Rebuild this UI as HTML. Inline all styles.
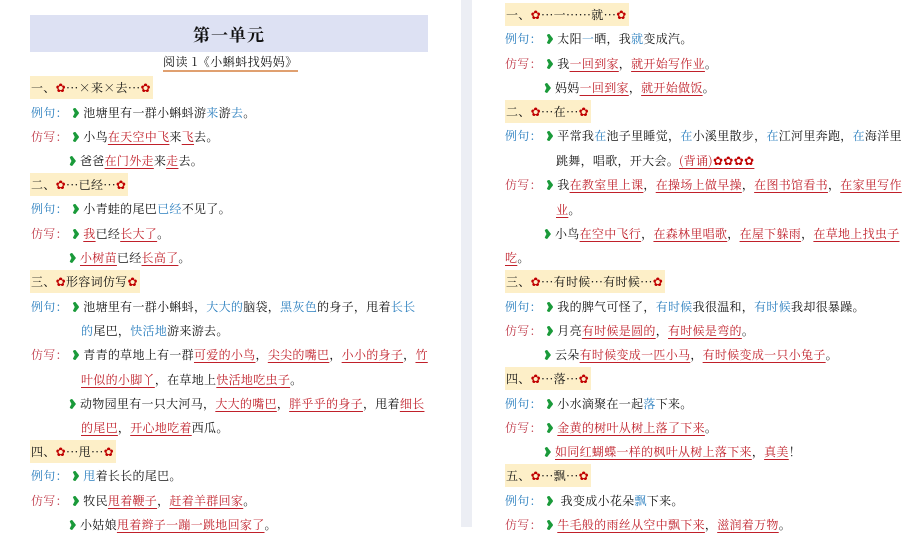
<!DOCTYPE html>
<html><head><meta charset="utf-8"><style>
html,body{margin:0;padding:0}
body{width:912px;height:527px;overflow:hidden;background:#fff;position:relative;font-family:"Noto Serif CJK SC","Liberation Serif",serif;font-size:12px;color:#111}
.gap{position:absolute;left:461px;top:0;width:11px;height:527px;background:#eceef4}
.l{position:absolute;height:16px;line-height:16px;white-space:nowrap;letter-spacing:0.3px}
.b{color:#2b7fbf}
.lb{color:#2b7fbf}
.lr{color:#c2414f}
.r{color:#c0202a;text-decoration:underline;text-decoration-color:#c0202a;text-underline-offset:3px}
.g{display:inline-block;width:7px;height:10px;background:#1a9a3a;border-radius:50% 60% 60% 50%;margin:0 4px 0 1px;vertical-align:-1px;clip-path:polygon(0 0,45% 0,100% 50%,45% 100%,0 100%,35% 50%)}
.h{background:#fdefc8;padding:3px 2px 3px 1px}
.f{color:#c00000;font-family:"DejaVu Sans",sans-serif}
.title{position:absolute;left:30px;top:15px;width:398px;height:37px;background:#dde1f3;text-align:center;line-height:37px;font-weight:bold;font-size:17px;letter-spacing:1px}
.sub{position:absolute;left:163px;top:54px;line-height:16px;border-bottom:2px solid #e0a070;letter-spacing:0.5px}
</style></head><body>
<div class="gap"></div>
<div class="title">第一单元</div>
<div class="sub">阅读 1《小蝌蚪找妈妈》</div>

<div class="l" style="left:30px;top:80px"><span class="h">一、<span class="f">✿</span>···×来×去···<span class="f">✿</span></span></div>
<div class="l" style="left:31px;top:105px"><span class="lb">例句：</span> <span class="g"></span>池塘里有一群小蝌蚪游<span class="b">来</span>游<span class="b">去</span>。</div>
<div class="l" style="left:31px;top:129px"><span class="lr">仿写：</span> <span class="g"></span>小鸟<span class="r">在天空中飞</span>来<span class="r">飞</span>去。</div>
<div class="l" style="left:68px;top:153px"><span class="g"></span>爸爸<span class="r">在门外走</span>来<span class="r">走</span>去。</div>
<div class="l" style="left:30px;top:177px"><span class="h">二、<span class="f">✿</span>···已经···<span class="f">✿</span></span></div>
<div class="l" style="left:31px;top:201px"><span class="lb">例句：</span> <span class="g"></span>小青蛙的尾巴<span class="b">已经</span>不见了。</div>
<div class="l" style="left:31px;top:226px"><span class="lr">仿写：</span> <span class="g"></span><span class="r">我</span>已经<span class="r">长大了</span>。</div>
<div class="l" style="left:68px;top:250px"><span class="g"></span><span class="r">小树苗</span>已经<span class="r">长高了</span>。</div>
<div class="l" style="left:30px;top:274px"><span class="h">三、<span class="f">✿</span>形容词仿写<span class="f">✿</span></span></div>
<div class="l" style="left:31px;top:299px"><span class="lb">例句：</span> <span class="g"></span>池塘里有一群小蝌蚪，<span class="b">大大的</span>脑袋，<span class="b">黑灰色</span>的身子，甩着<span class="b">长长</span></div>
<div class="l" style="left:81px;top:323px"><span class="b">的</span>尾巴，<span class="b">快活地</span>游来游去。</div>
<div class="l" style="left:31px;top:347px"><span class="lr">仿写：</span> <span class="g"></span>青青的草地上有一群<span class="r">可爱的小鸟</span>，<span class="r">尖尖的嘴巴</span>，<span class="r">小小的身子</span>，<span class="r">竹</span></div>
<div class="l" style="left:81px;top:372px"><span class="r">叶似的小脚丫</span>，在草地上<span class="r">快活地吃虫子</span>。</div>
<div class="l" style="left:68px;top:396px"><span class="g"></span>动物园里有一只大河马，<span class="r">大大的嘴巴</span>，<span class="r">胖乎乎的身子</span>，甩着<span class="r">细长</span></div>
<div class="l" style="left:81px;top:420px"><span class="r">的尾巴</span>，<span class="r">开心地吃着</span>西瓜。</div>
<div class="l" style="left:30px;top:444px"><span class="h">四、<span class="f">✿</span>···甩···<span class="f">✿</span></span></div>
<div class="l" style="left:31px;top:468px"><span class="lb">例句：</span> <span class="g"></span><span class="b">甩</span>着长长的尾巴。</div>
<div class="l" style="left:31px;top:493px"><span class="lr">仿写：</span> <span class="g"></span>牧民<span class="r">甩着鞭子</span>，<span class="r">赶着羊群回家</span>。</div>
<div class="l" style="left:68px;top:517px"><span class="g"></span>小姑娘<span class="r">甩着辫子一蹦一跳地回家了</span>。</div>

<div class="l" style="left:505px;top:7px"><span class="h">一、<span class="f">✿</span>···一······就···<span class="f">✿</span></span></div>
<div class="l" style="left:505px;top:31px"><span class="lb">例句：</span> <span class="g"></span>太阳<span class="b">一</span>晒，我<span class="b">就</span>变成汽。</div>
<div class="l" style="left:505px;top:56px"><span class="lr">仿写：</span> <span class="g"></span>我<span class="r">一回到家</span>，<span class="r">就开始写作业</span>。</div>
<div class="l" style="left:543px;top:80px"><span class="g"></span>妈妈<span class="r">一回到家</span>，<span class="r">就开始做饭</span>。</div>
<div class="l" style="left:505px;top:104px"><span class="h">二、<span class="f">✿</span>···在···<span class="f">✿</span></span></div>
<div class="l" style="left:505px;top:128px"><span class="lb">例句：</span> <span class="g"></span>平常我<span class="b">在</span>池子里睡觉，<span class="b">在</span>小溪里散步，<span class="b">在</span>江河里奔跑，<span class="b">在</span>海洋里</div>
<div class="l" style="left:556px;top:153px">跳舞，唱歌，开大会。<span class="r">(背诵)<span class="f">✿✿✿✿</span></span></div>
<div class="l" style="left:505px;top:177px"><span class="lr">仿写：</span> <span class="g"></span>我<span class="r">在教室里上课</span>，<span class="r">在操场上做早操</span>，<span class="r">在图书馆看书</span>，<span class="r">在家里写作</span></div>
<div class="l" style="left:556px;top:202px"><span class="r">业</span>。</div>
<div class="l" style="left:543px;top:226px"><span class="g"></span>小鸟<span class="r">在空中飞行</span>，<span class="r">在森林里唱歌</span>，<span class="r">在屋下躲雨</span>，<span class="r">在草地上找虫子</span></div>
<div class="l" style="left:505px;top:250px"><span class="r">吃</span>。</div>
<div class="l" style="left:505px;top:274px"><span class="h">三、<span class="f">✿</span>···有时候···有时候···<span class="f">✿</span></span></div>
<div class="l" style="left:505px;top:299px"><span class="lb">例句：</span> <span class="g"></span>我的脾气可怪了，<span class="b">有时候</span>我很温和，<span class="b">有时候</span>我却很暴躁。</div>
<div class="l" style="left:505px;top:323px"><span class="lr">仿写：</span> <span class="g"></span>月亮<span class="r">有时候是圆的</span>，<span class="r">有时候是弯的</span>。</div>
<div class="l" style="left:543px;top:347px"><span class="g"></span>云朵<span class="r">有时候变成一匹小马</span>，<span class="r">有时候变成一只小兔子</span>。</div>
<div class="l" style="left:505px;top:371px"><span class="h">四、<span class="f">✿</span>···落···<span class="f">✿</span></span></div>
<div class="l" style="left:505px;top:396px"><span class="lb">例句：</span> <span class="g"></span>小水滴聚在一起<span class="b">落</span>下来。</div>
<div class="l" style="left:505px;top:420px"><span class="lr">仿写：</span> <span class="g"></span><span class="r">金黄的树叶从树上落了下来</span>。</div>
<div class="l" style="left:543px;top:444px"><span class="g"></span><span class="r">如同红蝴蝶一样的枫叶从树上落下来</span>，<span class="r">真美</span>！</div>
<div class="l" style="left:505px;top:468px"><span class="h">五、<span class="f">✿</span>···飘···<span class="f">✿</span></span></div>
<div class="l" style="left:505px;top:493px"><span class="lb">例句：</span> <span class="g"></span> 我变成小花朵<span class="b">飘</span>下来。</div>
<div class="l" style="left:505px;top:517px"><span class="lr">仿写：</span> <span class="g"></span><span class="r">牛毛般的雨丝从空中飘下来</span>，<span class="r">滋润着万物</span>。</div>
</body></html>
